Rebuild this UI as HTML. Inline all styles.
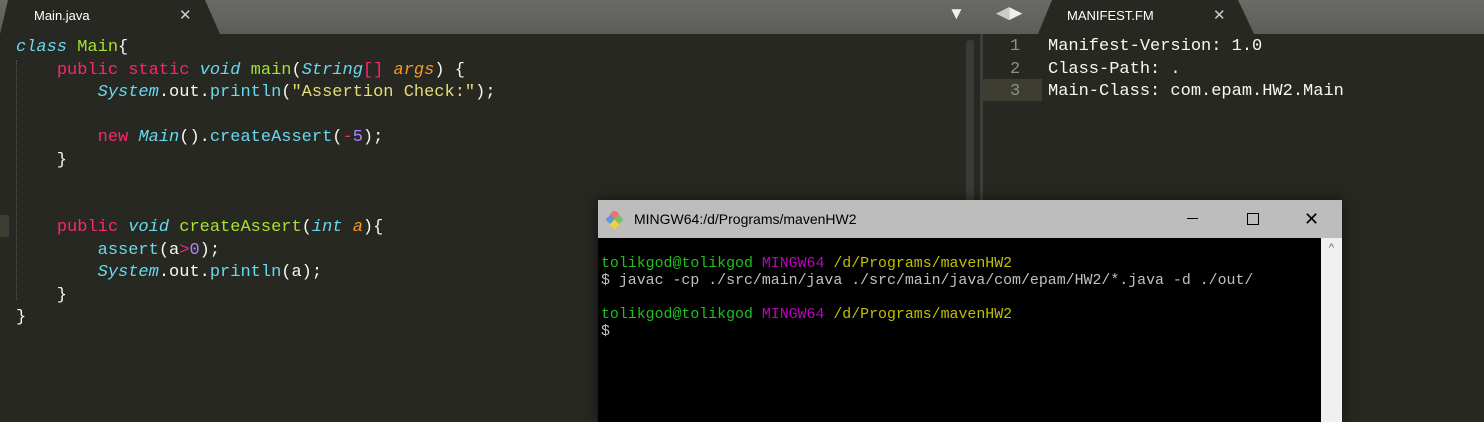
<!DOCTYPE html>
<html><head><style>
*{margin:0;padding:0;box-sizing:border-box}
body{width:1484px;height:422px;background:#272822;position:relative;overflow:hidden;font-family:"Liberation Sans",sans-serif}
.bar{position:absolute;left:0;top:0;width:1484px;height:34px;background:linear-gradient(#6b6b66,#5c5c58)}
.tab{position:absolute;top:0;height:34px;background:#272822;color:#fff;font-size:13px;line-height:32px}
.code{position:absolute;font-family:"Liberation Mono",monospace;font-size:17px;line-height:22.5px;color:#f8f8f2;white-space:pre}
.k{color:#f92672}.t{color:#66d9ef;font-style:italic}.f{color:#a6e22e}.s{color:#e6db74}.a{color:#fd971f;font-style:italic}.n{color:#ae81ff}.c{color:#66d9ef}
.term{position:absolute;left:598px;top:200px;width:744px;height:222px;background:#000;box-shadow:0 0 12px rgba(0,0,0,.6)}
.tt{height:38px;background:#bdbdbd;color:#000;font-size:14px;line-height:38px;padding-left:36px;position:relative}
.tx{position:absolute;font-family:"Liberation Mono",monospace;font-size:14.9px;line-height:17px;color:#c0c0c0;white-space:pre;left:3px;top:56px}
.g{color:#1cc31c}.m{color:#c000c0}.y{color:#c0c000}
</style></head><body>
<div class="bar"></div>
<div class="tab" style="left:0;width:222px;clip-path:polygon(8px 0,205px 0,220px 34px,0 34px);padding-left:34px">Main.java<span style="position:absolute;left:179px;color:#ccc;font-size:15px">✕</span></div>
<div style="position:absolute;left:948px;top:4px;color:#eee;font-size:17px">▼</div>
<div style="position:absolute;left:996px;top:3px;color:#ccc;font-size:17px">◀<span style="color:#eee">▶</span></div>
<div class="tab" style="left:1038px;width:218px;clip-path:polygon(14px 0,200px 0,216px 34px,0 34px);padding-left:29px">MANIFEST.FM<span style="position:absolute;left:175px;color:#ccc;font-size:15px">✕</span></div>
<div style="position:absolute;left:966px;top:40px;width:8px;height:170px;background:#3a3a36;border-radius:3px"></div>
<div style="position:absolute;left:980px;top:34px;width:3px;height:388px;background:#3d3d39"></div>
<div style="position:absolute;left:0;top:215px;width:9px;height:22px;background:#3e3d32"></div>
<div style="position:absolute;left:983px;top:79px;width:59px;height:22px;background:#3e3d32"></div>
<div style="position:absolute;left:16px;top:60px;height:240px;border-left:1px dotted #555"></div>
<div class="code" style="left:16px;top:37px"><span class="t">class</span> <span class="f">Main</span>{
    <span class="k">public</span> <span class="k">static</span> <span class="t">void</span> <span class="f">main</span>(<span class="t">String</span><span class="k">[]</span> <span class="a">args</span>) {
        <span class="t">System</span>.out.<span class="c">println</span>(<span class="s">"Assertion Check:"</span>);

        <span class="k">new</span> <span class="t">Main</span>().<span class="c">createAssert</span>(<span class="k">-</span><span class="n">5</span>);
    }


    <span class="k">public</span> <span class="t">void</span> <span class="f">createAssert</span>(<span class="t">int</span> <span class="a">a</span>){
        <span class="c">assert</span>(a<span class="k">&gt;</span><span class="n">0</span>);
        <span class="t">System</span>.out.<span class="c">println</span>(a);
    }
}</div>
<div class="code" style="left:1010px;top:36px;color:#8f908a">1
2
3</div>
<div class="code" style="left:1048px;top:36px">Manifest-Version: 1.0
Class-Path: .
Main-Class: com.epam.HW2.Main</div>
<div class="term">
<div class="tt"><svg style="position:absolute;left:8px;top:11px" width="18" height="18"><rect x="5" y="0" width="7" height="7" fill="#f07070" transform="rotate(45 8.5 3.5)"/><rect x="1" y="5" width="7" height="7" fill="#5a9be0" transform="rotate(45 4.5 8.5)"/><rect x="9" y="5" width="7" height="7" fill="#7ac060" transform="rotate(45 12.5 8.5)"/><rect x="5" y="10" width="7" height="7" fill="#f0d040" transform="rotate(45 8.5 13.5)"/></svg>MINGW64:/d/Programs/mavenHW2
<span style="position:absolute;left:589px;top:18px;width:11px;height:1px;background:#000"></span>
<span style="position:absolute;left:649px;top:13px;width:12px;height:12px;border:1px solid #000"></span>
<span style="position:absolute;left:706px;top:0;font-size:18px">✕</span></div>
<div style="position:absolute;right:0;top:38px;width:21px;height:184px;background:#f0f0f0;color:#606060;font-size:11px;text-align:center;padding-top:4px">^</div>
<div class="tx"><span class="g">tolikgod@tolikgod</span> <span class="m">MINGW64</span> <span class="y">/d/Programs/mavenHW2</span>
$ javac -cp ./src/main/java ./src/main/java/com/epam/HW2/*.java -d ./out/

<span class="g">tolikgod@tolikgod</span> <span class="m">MINGW64</span> <span class="y">/d/Programs/mavenHW2</span>
$</div>
</div>
</body></html>
